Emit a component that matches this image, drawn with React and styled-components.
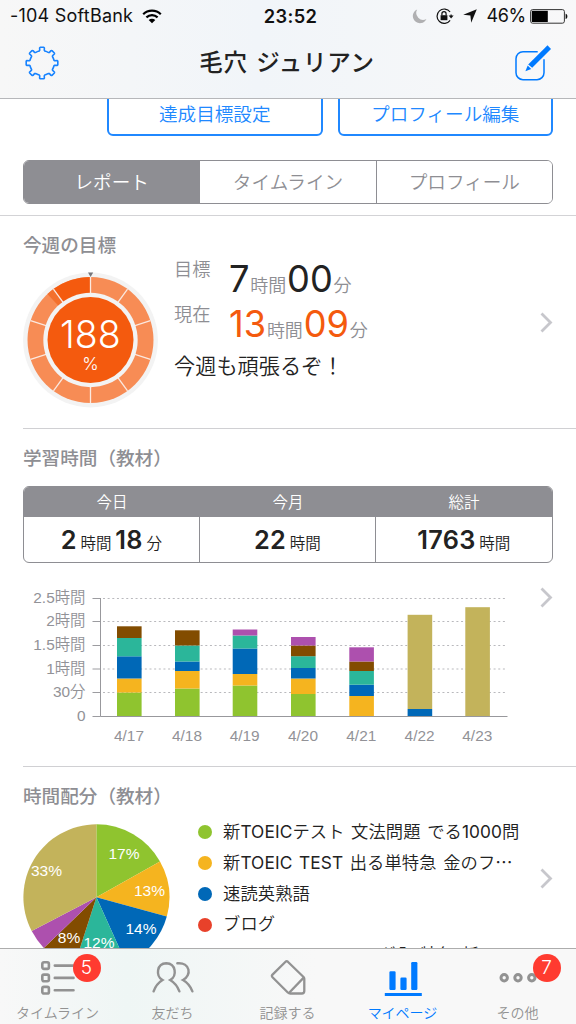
import React from 'react';
import styled, { createGlobalStyle } from 'styled-components';

const COLORS = {
  green: '#8fc42f',
  yellow: '#f5b41f',
  blue: '#0068b7',
  red: '#e8412a',
  teal: '#2bb69a',
  brown: '#824c00',
  purple: '#ad50ae',
  khaki: '#c3b35b',
};

// y values are measured from the top of the chart
const BARS = [
  { date: '4/17', x: 94, tops: [['green', 112.5], ['yellow', 98.5], ['blue', 76.3], ['teal', 58], ['brown', 46.3]] },
  { date: '4/18', x: 152, tops: [['green', 108.5], ['yellow', 91], ['blue', 81.5], ['teal', 65.5], ['brown', 50.3]] },
  { date: '4/19', x: 209.7, tops: [['green', 105.5], ['yellow', 94], ['blue', 68.5], ['teal', 55.5], ['purple', 49.5]] },
  { date: '4/20', x: 268, tops: [['green', 114], ['yellow', 98.5], ['blue', 88], ['teal', 76.2], ['brown', 65.5], ['purple', 57]] },
  { date: '4/21', x: 326.3, tops: [['yellow', 116], ['blue', 104.7], ['teal', 91], ['brown', 81.5], ['purple', 67.3]] },
  { date: '4/22', x: 384.6, tops: [['blue', 129], ['khaki', 34.8]] },
  { date: '4/23', x: 442.3, tops: [['khaki', 27.2]] },
];

const GRID = [
  ['2.5時間', 18.5],
  ['2時間', 41.5],
  ['1.5時間', 65.5],
  ['1時間', 89],
  ['30分', 112.5],
  ['0', 136.5],
];

const SLICES = [
  { color: 'green', from: 0, to: 60.6, text: '17%', x: 101, y: 35 },
  { color: 'yellow', from: 60.6, to: 105.3, text: '13%', x: 126.5, y: 72 },
  { color: 'blue', from: 105.3, to: 155.7, text: '14%', x: 118, y: 110 },
  { color: 'teal', from: 155.7, to: 197.9, text: '12%', x: 76, y: 124 },
  { color: 'brown', from: 197.9, to: 226.1, text: '8%', x: 46, y: 118.7 },
  { color: 'purple', from: 226.1, to: 242.4 },
  { color: 'khaki', from: 242.4, to: 360, text: '33%', x: 23.5, y: 52 },
];

const LEGEND = [
  { color: 'green', name: '新TOEICテスト 文法問題 でる1000問' },
  { color: 'yellow', name: '新TOEIC TEST 出る単特急 金のフ', cut: true },
  { color: 'blue', name: '速読英熟語' },
  { color: 'red', name: 'ブログ' },
  { color: 'teal', name: 'ニュースのリスニング入 特急 新' },
];

const point = (cx, cy, r, deg) => {
  const a = ((deg - 90) * Math.PI) / 180;
  return `${cx + r * Math.cos(a)} ${cy + r * Math.sin(a)}`;
};

const sector = (cx, cy, r, from, to) =>
  `M${cx} ${cy}L${point(cx, cy, r, from)}A${r} ${r} 0 ${
    to - from > 180 ? 1 : 0
  } 1 ${point(cx, cy, r, to)}Z`;

const gearPath = () => {
  let d = '';
  for (let i = 0; i < 8; i++) {
    const a = i * 45;
    d += `${i ? 'L' : 'M'}${point(17, 17, 12.3, a - 13)}`;
    d += `L${point(17, 17, 13, a - 10)}L${point(17, 17, 15.3, a - 9)}`;
    d += `Q${point(17, 17, 15.9, a - 8)} ${point(17, 17, 15.9, a - 6)}`;
    d += `L${point(17, 17, 15.9, a + 6)}`;
    d += `Q${point(17, 17, 15.9, a + 8)} ${point(17, 17, 15.3, a + 9)}`;
    d += `L${point(17, 17, 13, a + 10)}L${point(17, 17, 12.3, a + 13)}`;
    d += `A12.3 12.3 0 0 1 ${point(17, 17, 12.3, a + 32)}`;
  }
  return d + 'Z';
};

const Chevron = () => (
  <svg width='13' height='21' viewBox='0 0 13 21' fill='none'>
    <path d='M1.5 1.5L10.5 10.5L1.5 19.5' stroke='#c7c7cc' strokeWidth='2.8' />
  </svg>
);

const Header = () => (
  <Top>
    <StatusBar>
      <Carrier>
        <span>-104 SoftBank</span>
        <svg width='20' height='15' viewBox='0 0 20 15' fill='none' stroke='#000'>
          <path d='M1.2 5.2C6 .4 14 .4 18.8 5.2' strokeWidth='2.2' />
          <path d='M4.4 8.4C7.5 5.4 12.5 5.4 15.6 8.4' strokeWidth='2.2' />
          <path d='M10 14.3L6.7 11C8.5 9.3 11.5 9.3 13.3 11Z' fill='#000' stroke='none' />
        </svg>
      </Carrier>
      <Clock>23:52</Clock>
      <Indicators>
        <svg width='15' height='15' viewBox='0 0 15 15'>
          <path d='M5.2 .5A7.1 7.1 0 1 0 14.4 10A6.9 6.9 0 0 1 5.2 .5Z' fill='#b0b0b2' />
        </svg>
        <svg width='18' height='16' viewBox='0 0 18 16' fill='none' stroke='#111' strokeWidth='1.2'>
          <path d='M14.1 4A7.2 7.2 0 1 0 14.1 12.4' />
          <path d='M15.1 6.5V8.2' />
          <path d='M12.6 7.5H17.6L15.1 10.5Z' fill='#111' stroke='none' />
          <rect x='4.6' y='7.2' width='6.8' height='5' fill='#111' stroke='none' />
          <path d='M5.9 7.3V5.7A2.1 2.1 0 0 1 10.1 5.7V7.3' />
        </svg>
        <svg width='14' height='14' viewBox='0 0 14 14'>
          <path d='M13.8 .2L8.2 13.8L7.4 6.6L.2 5.8Z' fill='#111' />
        </svg>
        <Percent>46%</Percent>
        <svg width='38' height='15' viewBox='0 0 38 15'>
          <rect x='.6' y='.6' width='33.8' height='13.6' rx='2' fill='none' stroke='#333' />
          <rect x='1.8' y='1.8' width='16' height='11.2' fill='#000' />
          <path d='M35.6 4.8C38 5.2 38 9.6 35.6 10Z' fill='#111' />
        </svg>
      </Indicators>
    </StatusBar>
    <NavBar>
      <svg width='34' height='34' viewBox='0 0 34 34'>
        <path d={gearPath()} fill='none' stroke='#1783ff' strokeWidth='1.6' strokeLinejoin='round' />
      </svg>
      <NavTitle>毛穴 ジュリアン</NavTitle>
      <svg width='36' height='36' viewBox='0 0 36 36'>
        <path
          d='M22.7 6.7H8A7 7 0 0 0 1 13.7V27.7A7 7 0 0 0 8 34.7H22A7 7 0 0 0 29 27.7V14.2'
          fill='none'
          stroke='#007aff'
          strokeWidth='1.5'
        />
        <path d='M13.2 19.6L29.3 3.5L32.5 .3L36 3.9L17.2 22.8Z' fill='#007aff' />
        <path d='M12.7 20.5L16.2 24L10.4 26.2Z' fill='#007aff' />
      </svg>
    </NavBar>
  </Top>
);

const Ring = () => (
  <svg width='136' height='136' viewBox='0 0 136 136'>
    <circle cx='67.5' cy='68' r='67.4' fill='#f3f3f3' />
    <circle cx='67.5' cy='68' r='63' fill='#f78c55' />
    <path d={sector(67.5, 68, 63, 316.8, 324)} fill='#f3702d' />
    <path d={sector(67.5, 68, 63, 324, 360)} fill='#f45a0e' />
    {Array.from({ length: 10 }, (_, i) => (
      <path key={i} d={`M67.5 68L${point(67.5, 68, 63, i * 36)}`} stroke='#fbe9e0' strokeWidth='1.3' />
    ))}
    <circle cx='67.5' cy='68' r='47.2' fill='#f3f3f3' />
    <circle cx='67.5' cy='68' r='43' fill='#f45a0e' />
    <path d='M65 .5H70.2L67.6 5Z' fill='#75757a' />
    <RingText x='67.3' y='75.5' $size={37.5}>188</RingText>
    <RingText x='67.5' y='98' $size={17.5}>%</RingText>
  </svg>
);

const BarChart = () => (
  <svg width='490' height='170' viewBox='0 0 490 170'>
    {GRID.map(([label, y]) => (
      <g key={label}>
        <ChartText x='62.5' y={y + 4.8} textAnchor='end'>
          {label}
        </ChartText>
        <path d={`M69.5 ${y}H77.5`} stroke='#9c9ca0' />
        {label !== '0' && (
          <path d={`M80 ${y}H484.5`} stroke='#b9b9bd' strokeDasharray='2 2.65' />
        )}
      </g>
    ))}
    {BARS.map(({ date, x, tops }) => (
      <g key={date}>
        {tops.map(([color, top], i) => {
          const bottom = i ? tops[i - 1][1] : 136;
          return (
            <rect key={color} x={x} y={top} width='24.6' height={bottom - top} fill={COLORS[color]} />
          );
        })}
        <ChartText x={x + 12} y='161' textAnchor='middle'>
          {date}
        </ChartText>
      </g>
    ))}
    <path d='M77.5 18V136.5H484.5' fill='none' stroke='#98989c' />
  </svg>
);

const Pie = () => (
  <svg width='147' height='147' viewBox='0 0 147 147'>
    {SLICES.map((s) => (
      <path key={s.color} d={sector(73.4, 73.3, 73, s.from, s.to)} fill={COLORS[s.color]} />
    ))}
    {SLICES.filter((s) => s.text).map((s) => (
      <PieText key={s.color} x={s.x} y={s.y} textAnchor='middle'>
        {s.text}
      </PieText>
    ))}
  </svg>
);

const TabBar = () => (
  <Tabs>
    <Tab>
      <TabIcon>
        <svg width='36' height='36' viewBox='0 0 36 36' fill='none' stroke='#929292' strokeWidth='2.6' strokeLinecap='round'>
          <rect x='2.3' y='2.3' width='6.6' height='6.6' rx='1.6' />
          <rect x='2.3' y='14.6' width='6.6' height='6.6' rx='1.6' />
          <rect x='2.3' y='26.9' width='6.6' height='6.6' rx='1.6' />
          <path d='M14.8 5.6H33.5M14.8 17.9H33.5M14.8 30.2H33.5' />
        </svg>
        <Badge>5</Badge>
      </TabIcon>
      タイムライン
    </Tab>
    <Tab>
      <TabIcon>
        <svg width='42' height='36' viewBox='0 0 42 36' fill='none' stroke='#929292' strokeWidth='2.4' strokeLinecap='round'>
          <path d='M1.6 31.3C3.3 26.5 6.5 22.5 10.5 20C3.5 16 4.5 3.5 14.3 3.2C24.2 3.5 25.2 16 18.2 20C22.3 22.5 25.6 26.5 27.4 31.3' />
          <path d='M25.3 3.3C38.3 2 40 15.5 31 20C35.3 22.5 38.6 26.5 40.4 31.3' />
        </svg>
      </TabIcon>
      友だち
    </Tab>
    <Tab>
      <TabIcon>
        <svg width='36' height='36' viewBox='0 0 36 36' fill='none' stroke='#929292' strokeWidth='2.3' strokeLinejoin='round'>
          <path d='M15.8 1.5Q16.8 .8 17.8 1.7L33.8 17.3Q34.3 18 34.3 18.8V31Q34.3 33.5 31.8 33.5H20.3Q18.9 33.5 17.8 32.5L2.5 17.2Q1.3 15.8 2.5 14.6Z' />
          <path d='M18.7 33.2L33.7 17.6' />
        </svg>
      </TabIcon>
      記録する
    </Tab>
    <Tab $active>
      <TabIcon>
        <svg width='38' height='36' viewBox='0 0 38 36' fill='#007aff'>
          <rect x='5.4' y='11.2' width='6.2' height='18.8' rx='1.2' />
          <rect x='16.4' y='17.6' width='6.2' height='12.4' rx='1.2' />
          <rect x='27.2' y='2' width='6.2' height='28' rx='1.2' />
          <rect x='.8' y='33' width='37' height='3' />
        </svg>
      </TabIcon>
      マイページ
    </Tab>
    <Tab>
      <TabIcon>
        <svg width='38' height='36' viewBox='0 0 38 36' fill='none' stroke='#929292' strokeWidth='3'>
          <circle cx='5.2' cy='17.8' r='3.2' />
          <circle cx='19' cy='17.8' r='3.2' />
          <circle cx='32.8' cy='17.8' r='3.2' />
        </svg>
        <Badge>7</Badge>
      </TabIcon>
      その他
    </Tab>
  </Tabs>
);

const App = () => {
  return (
    <Screen>
      <GlobalStyle />
      <Header />
      <Content>
        <Actions>
          <ActionButton>達成目標設定</ActionButton>
          <ActionButton>プロフィール編集</ActionButton>
        </Actions>
        <Segments>
          <Segment $active>レポート</Segment>
          <Segment>タイムライン</Segment>
          <Segment>プロフィール</Segment>
        </Segments>

        <GoalSection>
          <SectionTitle>今週の目標</SectionTitle>
          <GoalBody>
            <Ring />
            <GoalInfo>
              <GoalRow>
                <GoalLabel>目標</GoalLabel>
                <Big>7</Big>
                <Unit>時間</Unit>
                <Big>00</Big>
                <Unit>分</Unit>
              </GoalRow>
              <GoalRow $color='#f45a0e'>
                <GoalLabel>現在</GoalLabel>
                <Big>13</Big>
                <Unit>時間</Unit>
                <Big>09</Big>
                <Unit>分</Unit>
              </GoalRow>
              <Comment>今週も頑張るぞ！</Comment>
            </GoalInfo>
            <Arrow $top={40}>
              <Chevron />
            </Arrow>
          </GoalBody>
        </GoalSection>

        <StudySection>
          <SectionTitle>学習時間（教材）</SectionTitle>
          <Totals>
            <Total>
              <TotalHead>今日</TotalHead>
              <TotalValue>
                <b>2</b>時間<b>18</b>分
              </TotalValue>
            </Total>
            <Total>
              <TotalHead>今月</TotalHead>
              <TotalValue>
                <b>22</b>時間
              </TotalValue>
            </Total>
            <Total>
              <TotalHead>総計</TotalHead>
              <TotalValue>
                <b>1763</b>時間
              </TotalValue>
            </Total>
          </Totals>
          <ChartRow>
            <BarChart />
            <Arrow $top={7}>
              <Chevron />
            </Arrow>
          </ChartRow>
        </StudySection>

        <ShareSection>
          <SectionTitle>時間配分（教材）</SectionTitle>
          <ShareBody>
            <Pie />
            <Legend>
              {LEGEND.map(({ color, name, cut }) => (
                <LegendItem key={color} $color={COLORS[color]}>
                  <span>
                    {name}
                    {cut && <Ellipsis>…</Ellipsis>}
                  </span>
                </LegendItem>
              ))}
            </Legend>
            <Arrow $top={44}>
              <Chevron />
            </Arrow>
          </ShareBody>
        </ShareSection>
      </Content>
      <TabBar />
    </Screen>
  );
};

const GlobalStyle = createGlobalStyle`
  * {
    box-sizing: border-box;
  }
  body {
    margin: 0;
    background: #fff;
    font-family: Inter, 'Noto Sans CJK JP', sans-serif;
  }
  svg {
    display: block;
    flex-shrink: 0;
  }
`;

const Screen = styled.div`
  width: 576px;
  height: 1024px;
  display: flex;
  flex-direction: column;
  overflow: hidden;
  color: #222;
`;

const Top = styled.header`
  height: 99px;
  flex-shrink: 0;
  background: linear-gradient(90deg, #f7f7f7, #f1f5f9 45%, #f8f8f9);
  border-bottom: 1px solid #b6b7ba;
`;

const StatusBar = styled.div`
  height: 32px;
  padding: 0 8px 0 10px;
  display: grid;
  grid-template-columns: 1fr 60px 1fr;
  align-items: center;
  font-size: 18px;
  line-height: 32px;
  color: #111;
`;

const Carrier = styled.div`
  display: flex;
  align-items: center;
  gap: 9px;
  letter-spacing: 0.22px;
`;

const Clock = styled.div`
  text-align: center;
  font-size: 18.3px;
  font-weight: 600;
  letter-spacing: 0.4px;
  padding-left: 3px;
`;

const Indicators = styled.div`
  display: flex;
  align-items: center;
  justify-content: flex-end;
  gap: 9px;
`;

const Percent = styled.span`
  margin-right: -5px;
  letter-spacing: -0.3px;
`;

const NavBar = styled.div`
  height: 62px;
  padding: 0 25px;
  display: flex;
  align-items: center;
  justify-content: space-between;
`;

const NavTitle = styled.h1`
  margin: 0;
  font-size: 23.5px;
  font-weight: 500;
  letter-spacing: 0.7px;
  word-spacing: 1.5px;
  line-height: 60px;
`;

const Content = styled.main`
  flex: 1;
  min-height: 0;
  overflow: hidden;
`;

const Actions = styled.div`
  display: flex;
  gap: 15px;
  margin: -7px 23px 0 107px;
`;

const ActionButton = styled.div`
  flex: 1;
  height: 44px;
  border: 2px solid #2088ff;
  border-radius: 6px;
  color: #2088ff;
  font-size: 18.6px;
  font-weight: 350;
  line-height: 40px;
  text-align: center;
`;

const Segments = styled.div`
  display: flex;
  height: 44px;
  margin: 24px 23px 0;
  border: 1.5px solid #8e8e93;
  border-radius: 6px;
  overflow: hidden;
`;

const Segment = styled.div`
  flex: 1;
  color: ${(props) => (props.$active ? '#fff' : '#8e8e93')};
  background: ${(props) => (props.$active ? '#8e8e93' : '#fff')};
  font-size: 18.6px;
  font-weight: 350;
  line-height: 42px;
  text-align: center;
  &:not(:last-child) {
    border-right: 1px solid #8e8e93;
  }
`;

const GoalSection = styled.section`
  height: 213px;
  margin-top: 11px;
  padding: 14px 0 0 23px;
  border-top: 1px solid #d3d3d6;
`;

const StudySection = styled.section`
  height: 338px;
  margin-left: 23px;
  padding-top: 14px;
  border-top: 1px solid #d0d0d3;
`;

const ShareSection = styled.section`
  margin-left: 23px;
  padding-top: 14px;
  border-top: 1px solid #d0d0d3;
`;

const SectionTitle = styled.h2`
  margin: 0;
  color: #8e8e93;
  font-size: 18.6px;
  font-weight: 500;
  line-height: 30px;
`;

const GoalBody = styled.div`
  display: flex;
  margin-top: 12px;
`;

const GoalInfo = styled.div`
  flex: 1;
  padding-left: 15px;
  margin-top: -15px;
`;

const GoalRow = styled.div`
  display: flex;
  align-items: baseline;
  height: 44.6px;
  line-height: 45.6px;
  color: ${(props) => props.$color || '#222'};
`;

const GoalLabel = styled.span`
  width: 55px;
  color: #8e8e93;
  font-size: 18.2px;
  font-weight: 350;
  line-height: 20px;
  align-self: flex-start;
  margin-top: 2px;
`;

const Big = styled.span`
  font-size: 36.2px;
`;

const Unit = styled.span`
  color: #8e8e93;
  font-size: 18px;
  font-weight: 350;
  margin: 0 0.8px;
`;

const Comment = styled.div`
  font-size: 21.2px;
  font-weight: 350;
  line-height: 30px;
  margin-top: 5px;
`;

const Arrow = styled.div`
  width: 36px;
  margin-top: ${(props) => props.$top}px;
`;

const Totals = styled.div`
  display: flex;
  height: 77px;
  margin: 13px 23px 0 0;
  border: 1.5px solid #8e8e93;
  border-radius: 6px;
  overflow: hidden;
`;

const Total = styled.div`
  flex: 1;
  text-align: center;
  &:not(:last-child) > :last-child {
    border-right: 1px solid #8e8e93;
  }
`;

const TotalHead = styled.div`
  height: 30px;
  background: #8e8e93;
  color: #fff;
  font-size: 15.5px;
  font-weight: 350;
  line-height: 31px;
`;

const TotalValue = styled.div`
  height: 45px;
  padding-right: 4px;
  font-size: 15.5px;
  font-weight: 350;
  line-height: 53px;
  & b {
    font-size: 25.3px;
    font-weight: 600;
    letter-spacing: 0.3px;
    line-height: 40px;
    margin: 0 3.7px;
  }
`;

const ChartRow = styled.div`
  display: flex;
  justify-content: space-between;
  margin-top: 17px;
`;

const ShareBody = styled.div`
  display: flex;
  margin-top: 13px;
`;

const Legend = styled.div`
  flex: 1;
  margin-top: -7px;
  padding-left: 28px;
`;

const LegendItem = styled.div`
  display: flex;
  align-items: center;
  gap: 18px;
  height: 30.8px;
  font-family: Inter, 'Noto Sans CJK JP DemiLight', 'Noto Sans CJK JP', sans-serif;
  font-size: 17.3px;
  letter-spacing: 0.1px;
  word-spacing: 1.6px;
  white-space: nowrap;
  line-height: 30.8px;
  &::before {
    content: '';
    width: 14px;
    height: 14px;
    margin-right: -7px;
    border-radius: 50%;
    background: ${(props) => props.$color};
  }
`;

const Ellipsis = styled.span`
  font-family: 'Noto Sans CJK JP', sans-serif;
`;

const RingText = styled.text`
  fill: #fff;
  font-size: ${(props) => props.$size}px;
  font-weight: 300;
  text-anchor: middle;
`;

const ChartText = styled.text`
  fill: #929297;
  font-family: 'Liberation Sans', 'Noto Sans CJK JP', sans-serif;
  font-size: 15.4px;
  font-weight: 350;
`;

const PieText = styled.text`
  fill: #fff;
  font-family: 'Liberation Sans', sans-serif;
  font-size: 15.5px;
`;

const Tabs = styled.nav`
  height: 76px;
  flex-shrink: 0;
  display: flex;
  padding-right: 1px;
  background: linear-gradient(90deg, #f8f8f8, #eff6f5 22%, #f8f8f8 55%);
  border-top: 1px solid #adadad;
`;

const Tab = styled.div`
  flex: 1;
  display: flex;
  flex-direction: column;
  align-items: center;
  padding-top: 11px;
  color: ${(props) => (props.$active ? '#007aff' : '#929292')};
  font-size: 14px;
  font-weight: 350;
  line-height: 34px;
`;

const TabIcon = styled.div`
  position: relative;
  height: 37px;
`;

const Badge = styled.span`
  position: absolute;
  top: -6px;
  left: calc(50% + 15px);
  width: 28px;
  height: 28px;
  border-radius: 50%;
  background: #ff3b30;
  color: #fff;
  font-size: 19px;
  line-height: 28px;
  text-align: center;
`;

export default App;
